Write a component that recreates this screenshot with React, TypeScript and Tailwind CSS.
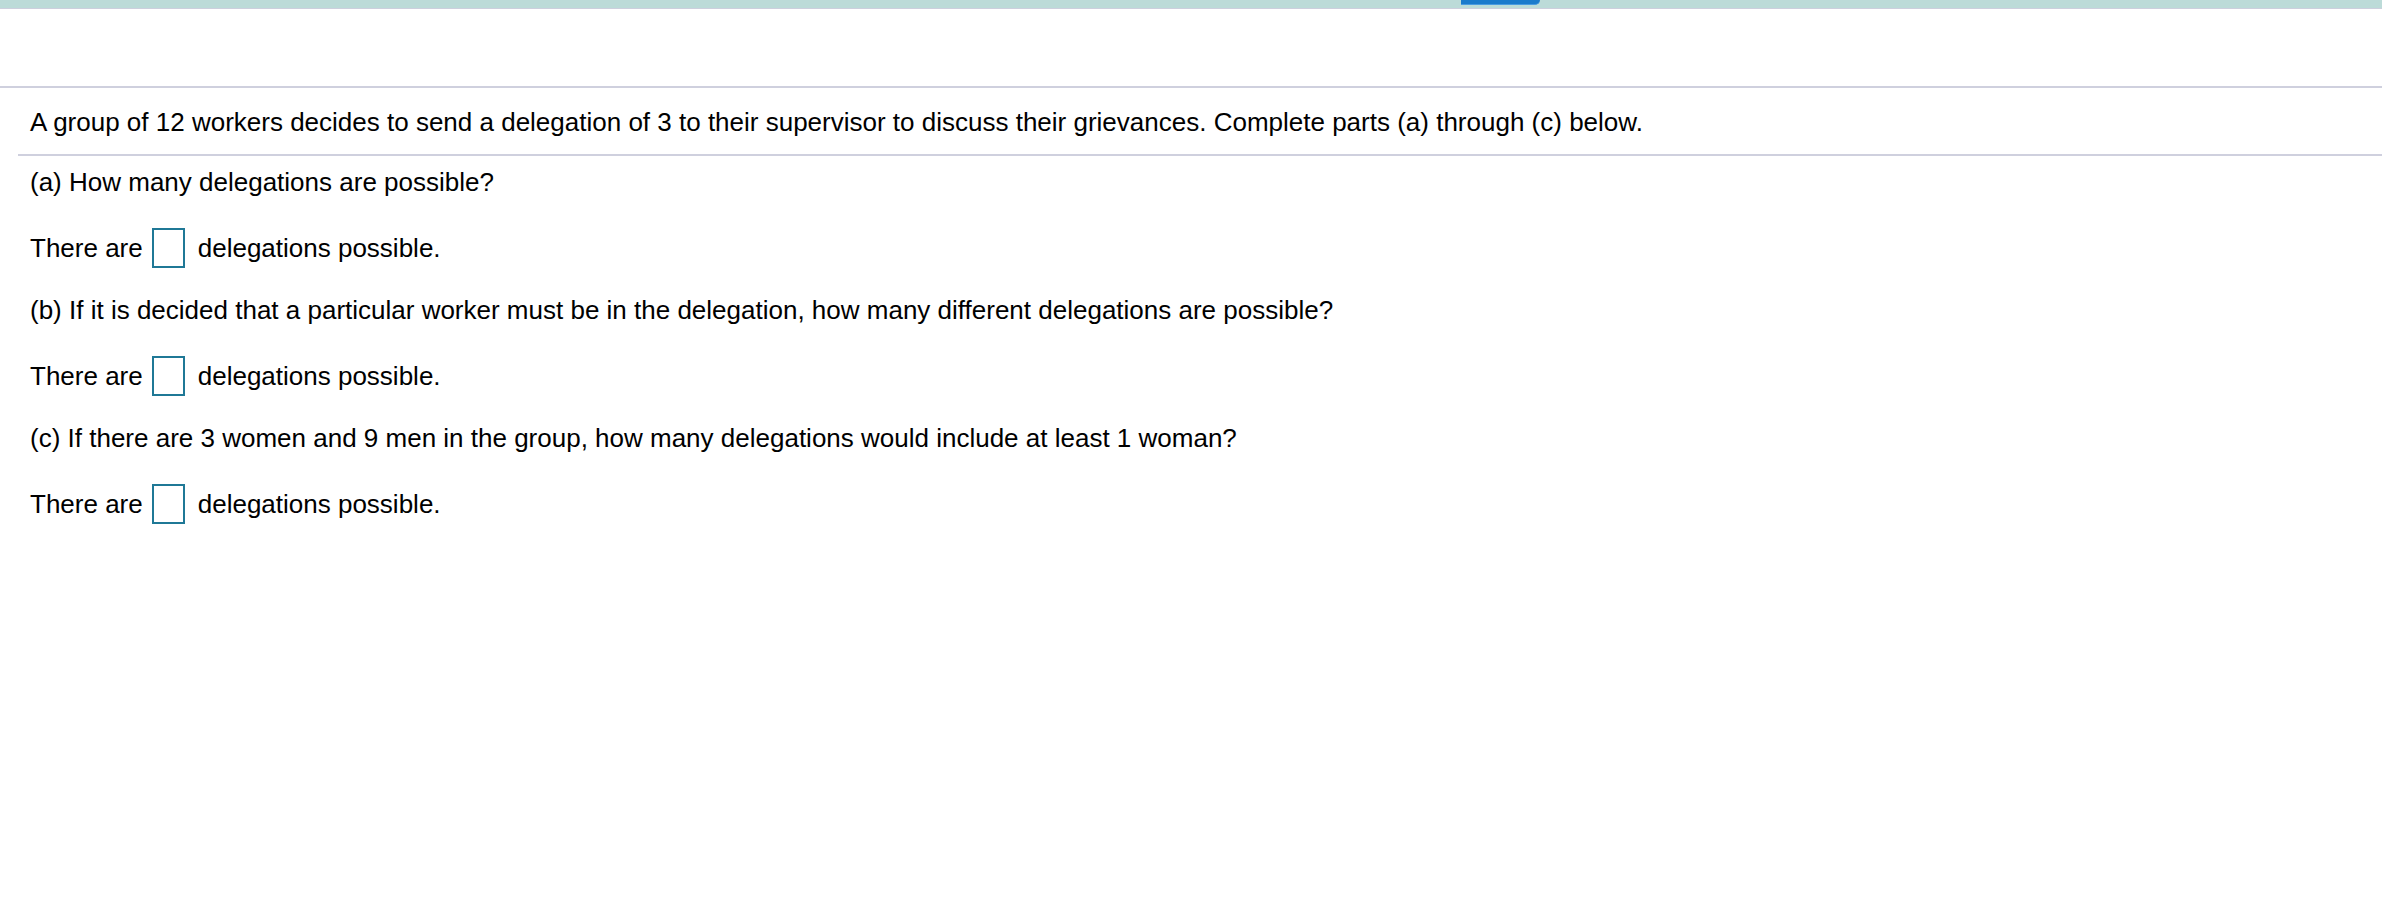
export default function App() {
  const parts = [
    "(a) How many delegations are possible?",
    "(b) If it is decided that a particular worker must be in the delegation, how many different delegations are possible?",
    "(c) If there are 3 women and 9 men in the group, how many delegations would include at least 1 woman?",
  ];

  return (
    <div
      className="min-h-[908px] w-full bg-white text-[26px] leading-[31px] text-black"
      style={{ fontFamily: '"Liberation Sans", Arial, sans-serif' }}
    >
      {/* top strip with the active tab */}
      <div className="flex h-[8px] bg-[#bcdbd8]">
        <div className="ml-[1461px] h-[5px] w-[79px] rounded-br-[9px] border-b border-[#4a9be0] bg-[#1b7bcc]" />
      </div>
      <div className="h-[1px] bg-[#cdcfdd]" />

      <div className="mt-[77px] h-[2px] bg-[#cfd0de]" />

      <p className="pb-[16px] pl-[30px] pt-[19px]">
        A group of 12 workers decides to send a delegation of 3 to their supervisor to discuss their grievances. Complete parts (a) through (c) below.
      </p>
      <div className="ml-[18px] h-[2px] bg-[#cfd0de]" />

      <div className="pl-[30px] pt-[11px]">
        {parts.map((q, i) => (
          <div key={i} className={i > 0 ? "mt-[27px]" : ""}>
            <p>{q}</p>
            <div className="mt-[30px] flex h-[40px] items-center">
              <span>There are</span>
              <span className="ml-[9px] mr-[13px] h-[40px] w-[33px] border-2 border-[#1f7896] bg-white" />
              <span>delegations possible.</span>
            </div>
          </div>
        ))}
      </div>
    </div>
  );
}
